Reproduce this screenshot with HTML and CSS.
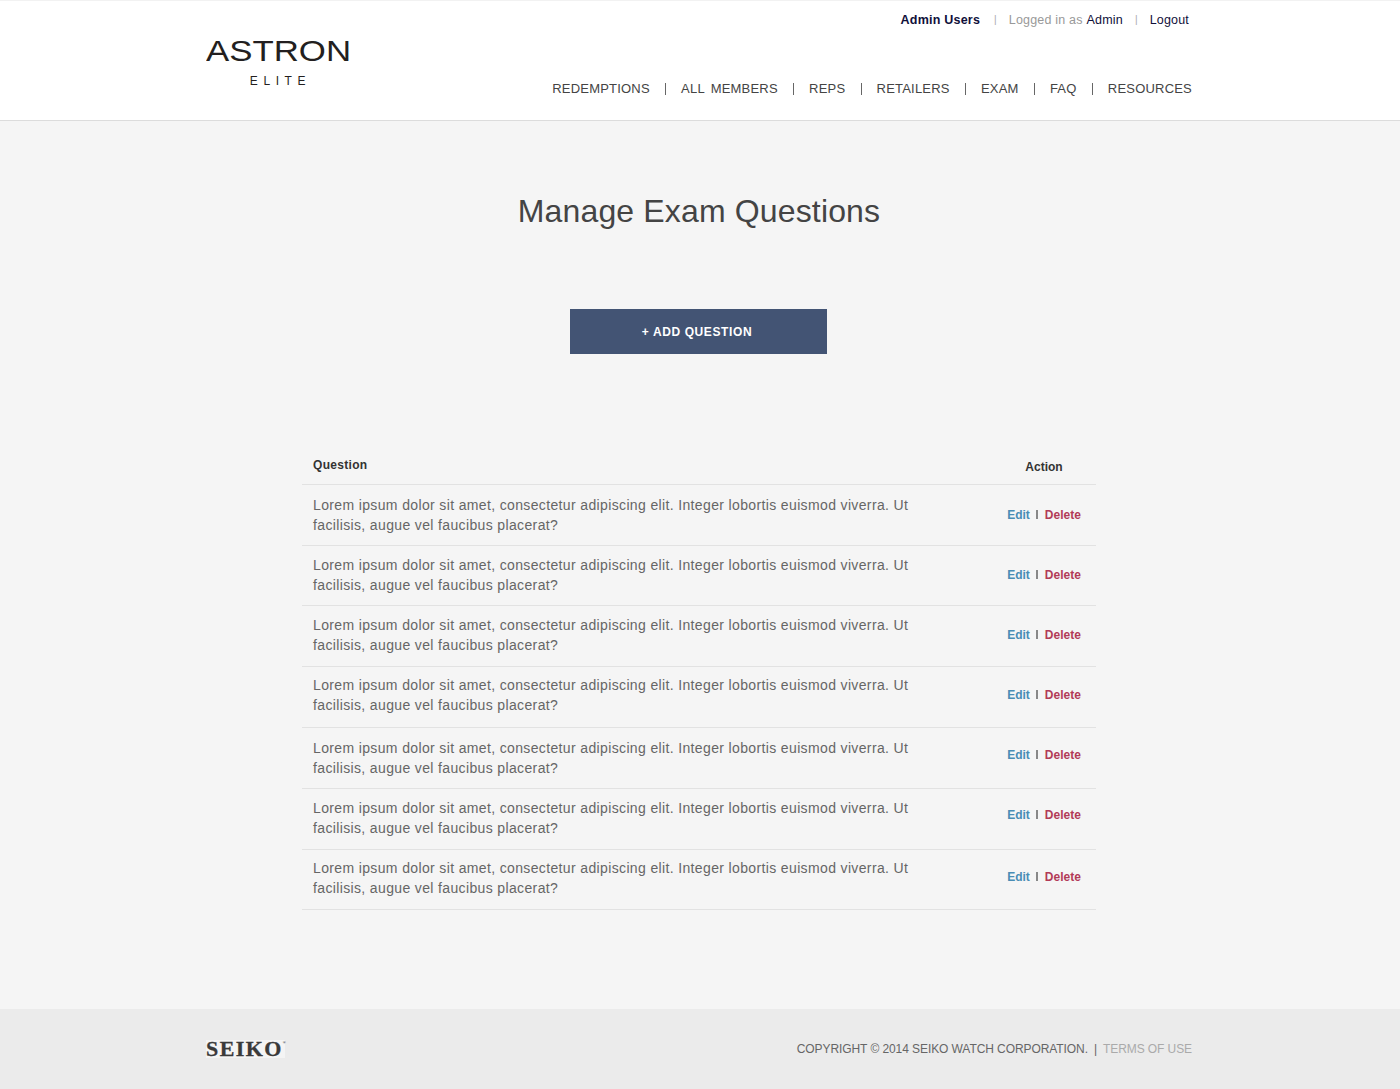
FILE: index.html
```html
<!DOCTYPE html>
<html lang="en">
<head>
    <meta charset="UTF-8">
    <meta name="viewport" content="width=device-width, initial-scale=1.0">
    <title>Manage Exam Questions - Astron Elite</title>
    <link rel="stylesheet" href="styles.css">
</head>
<body>
    <header class="site-header">
        <div class="header-inner">
            <a class="logo" href="#">
                <span class="logo-name">ASTRON</span>
                <span class="logo-sub">ELITE</span>
            </a>
            <div class="header-right">
                <ul class="user-links">
                    <li><a class="strong" href="#">Admin Users</a></li>
                    <li class="bar">|</li>
                    <li><span class="muted">Logged in as</span> <a href="#">Admin</a></li>
                    <li class="bar">|</li>
                    <li><a href="#">Logout</a></li>
                </ul>
                <nav class="main-nav">
                    <a href="#">REDEMPTIONS</a>
                    <a href="#">ALL MEMBERS</a>
                    <a href="#">REPS</a>
                    <a href="#">RETAILERS</a>
                    <a href="#">EXAM</a>
                    <a href="#">FAQ</a>
                    <a href="#">RESOURCES</a>
                </nav>
            </div>
        </div>
    </header>

    <main class="content">
        <h1>Manage Exam Questions</h1>
        <a class="add-btn" href="#">+ ADD QUESTION</a>

        <table class="questions">
            <thead>
                <tr>
                    <th class="col-question">Question</th>
                    <th class="col-action">Action</th>
                </tr>
            </thead>
            <tbody>
                <tr>
                    <td class="col-question"><p>Lorem ipsum dolor sit amet, consectetur adipiscing elit. Integer lobortis euismod viverra. Ut facilisis, augue vel faucibus placerat?</p></td>
                    <td class="col-action"><a class="edit" href="#">Edit</a><span class="sep"></span><a class="delete" href="#">Delete</a></td>
                </tr>
                <tr>
                    <td class="col-question"><p>Lorem ipsum dolor sit amet, consectetur adipiscing elit. Integer lobortis euismod viverra. Ut facilisis, augue vel faucibus placerat?</p></td>
                    <td class="col-action"><a class="edit" href="#">Edit</a><span class="sep"></span><a class="delete" href="#">Delete</a></td>
                </tr>
                <tr>
                    <td class="col-question"><p>Lorem ipsum dolor sit amet, consectetur adipiscing elit. Integer lobortis euismod viverra. Ut facilisis, augue vel faucibus placerat?</p></td>
                    <td class="col-action"><a class="edit" href="#">Edit</a><span class="sep"></span><a class="delete" href="#">Delete</a></td>
                </tr>
                <tr>
                    <td class="col-question"><p>Lorem ipsum dolor sit amet, consectetur adipiscing elit. Integer lobortis euismod viverra. Ut facilisis, augue vel faucibus placerat?</p></td>
                    <td class="col-action"><a class="edit" href="#">Edit</a><span class="sep"></span><a class="delete" href="#">Delete</a></td>
                </tr>
                <tr>
                    <td class="col-question"><p>Lorem ipsum dolor sit amet, consectetur adipiscing elit. Integer lobortis euismod viverra. Ut facilisis, augue vel faucibus placerat?</p></td>
                    <td class="col-action"><a class="edit" href="#">Edit</a><span class="sep"></span><a class="delete" href="#">Delete</a></td>
                </tr>
                <tr>
                    <td class="col-question"><p>Lorem ipsum dolor sit amet, consectetur adipiscing elit. Integer lobortis euismod viverra. Ut facilisis, augue vel faucibus placerat?</p></td>
                    <td class="col-action"><a class="edit" href="#">Edit</a><span class="sep"></span><a class="delete" href="#">Delete</a></td>
                </tr>
                <tr>
                    <td class="col-question"><p>Lorem ipsum dolor sit amet, consectetur adipiscing elit. Integer lobortis euismod viverra. Ut facilisis, augue vel faucibus placerat?</p></td>
                    <td class="col-action"><a class="edit" href="#">Edit</a><span class="sep"></span><a class="delete" href="#">Delete</a></td>
                </tr>
            </tbody>
        </table>
    </main>

    <footer class="site-footer">
        <div class="footer-inner">
            <span class="seiko">SEIKO<sup>&reg;</sup></span>
            <p class="copyright">COPYRIGHT &copy; 2014 SEIKO WATCH CORPORATION.<span class="footer-bar">|</span><a href="#">TERMS OF USE</a></p>
        </div>
    </footer>
</body>
</html>
```

FILE: styles.css
```css
/* General Styles */
body {
    font-family: "Liberation Sans", Arial, sans-serif;
    margin: 0;
    padding: 0;
    background-color: #f5f5f5;
    color: #333;
}

a {
    color: inherit;
    text-decoration: none;
}

/* Header */
.site-header {
    background-color: #fff;
    border-top: 1px solid #f2f2f2;
    border-bottom: 1px solid #dcdcdc;
    height: 119px;
    padding-right: 2px;
}

.header-inner {
    width: 986px;
    margin: 0 auto;
    display: flex;
    justify-content: space-between;
}

.logo {
    display: block;
    width: 144px;
    margin-top: 33px;
    color: #231f20;
    text-align: center;
}

.logo-name {
    display: block;
    font-size: 29px;
    line-height: 34px;
    white-space: nowrap;
    transform: scaleX(1.2);
    transform-origin: left center;
    text-align: left;
}

.logo-sub {
    display: block;
    font-size: 12px;
    line-height: 14px;
    letter-spacing: 5.6px;
    margin-top: 6px;
    padding-left: 5px;
}

.header-right {
    display: flex;
    flex-direction: column;
    align-items: flex-end;
}

.user-links {
    list-style: none;
    display: flex;
    margin: 11px 3px 0 0;
    padding: 0;
    font-size: 12.5px;
    line-height: 16px;
    letter-spacing: 0.18px;
    color: #10103a;
}

.user-links .strong {
    font-weight: bold;
    letter-spacing: 0.22px;
    margin-right: 2px;
}

.user-links .muted {
    color: #999;
    margin-right: 1px;
}

.user-links .bar {
    color: #aaa;
    font-size: 10px;
    margin: 0 12px;
}

.main-nav {
    display: flex;
    margin-top: 53px;
    font-size: 13px;
    line-height: 16px;
    letter-spacing: 0.2px;
    word-spacing: 2.5px;
    color: #444;
}

.main-nav a + a::before {
    content: "";
    display: inline-block;
    width: 1px;
    height: 12px;
    margin: 0 15px 0 15.3px;
    vertical-align: -2px;
    background-color: #666;
}

/* Content */
.content {
    height: 888px;
    padding-right: 2px;
    display: flex;
    flex-direction: column;
    align-items: center;
}

h1 {
    margin: 70px 0 0;
    font-size: 32px;
    line-height: 40px;
    font-weight: normal;
    color: #444;
    letter-spacing: 0.15px;
}

.add-btn {
    display: block;
    box-sizing: border-box;
    width: 257px;
    height: 45px;
    margin: 78px 1px 0 0;
    padding: 1px 3px 0 0;
    background-color: #435474;
    color: #fff;
    font-size: 12px;
    font-weight: bold;
    line-height: 45px;
    letter-spacing: 0.6px;
    text-align: center;
}

/* Questions table */
.questions {
    width: 794px;
    margin-top: 91px;
    border-collapse: collapse;
}

.questions th {
    height: 39px;
    font-size: 12px;
    color: #333;
    letter-spacing: 0.3px;
    border-bottom: 1px solid #e2e2e2;
    padding: 0;
}

.questions th.col-question {
    text-align: left;
    padding-left: 11px;
}

.questions th.col-action {
    height: 29px;
    vertical-align: bottom;
    padding-bottom: 10px;
    letter-spacing: 0;
}

/* row pitch and text offsets are not quite even from row to row */
.questions tbody tr { --row: 61px; --text-top: 9px; --action-top: 19px; }
.questions tbody tr:nth-child(1) { --text-top: 10px; --action-top: 20px; }
.questions tbody tr:nth-child(2) { --row: 60px; }
.questions tbody tr:nth-child(4) { --text-top: 8px; --action-top: 18px; }
.questions tbody tr:nth-child(5) { --text-top: 10px; --action-top: 17px; }
.questions tbody tr:nth-child(6) { --action-top: 16px; }
.questions tbody tr:nth-child(7) { --row: 60px; --text-top: 8px; --action-top: 17px; }

.questions td {
    box-sizing: border-box;
    height: var(--row);
    padding: 0;
    vertical-align: top;
    border-bottom: 1px solid #e2e2e2;
}

.questions td.col-question {
    padding-top: var(--text-top);
}

.questions td.col-action {
    padding-top: var(--action-top);
    line-height: 20px;
}

.questions td p {
    margin: 0 0 0 11px;
    width: 610px;
    font-size: 14px;
    line-height: 20px;
    letter-spacing: 0.36px;
    color: #666;
}

.col-action {
    width: 104px;
    text-align: center;
    font-size: 12px;
    font-weight: bold;
}

.edit {
    color: #4a8db5;
}

.delete {
    color: #b23a57;
}

.sep {
    display: inline-block;
    width: 2px;
    height: 9px;
    margin: 0 6.5px;
    background-color: #888;
}

/* Footer */
.site-footer {
    background-color: #ebebeb;
    height: 80px;
    padding-right: 2px;
}

.footer-inner {
    width: 986px;
    margin: 0 auto;
    height: 80px;
    display: flex;
    justify-content: space-between;
    align-items: center;
}

.seiko {
    display: block;
    width: 79px;
    background-color: #f4f4f4;
    font-family: "Liberation Serif", serif;
    font-weight: bold;
    font-size: 22px;
    line-height: 18px;
    letter-spacing: 1.4px;
    color: #3a3a3a;
    white-space: nowrap;
    -webkit-text-stroke: 0.3px #3a3a3a;
}

.seiko sup {
    font-size: 4px;
    line-height: 0;
    letter-spacing: 0;
    vertical-align: 12px;
    -webkit-text-stroke: 0;
}

.copyright {
    margin: 0;
    font-size: 12px;
    line-height: 16px;
    letter-spacing: -0.08px;
    color: #666;
}

.copyright a {
    color: #aaa;
}

.footer-bar {
    margin: 0 6px;
}
```
